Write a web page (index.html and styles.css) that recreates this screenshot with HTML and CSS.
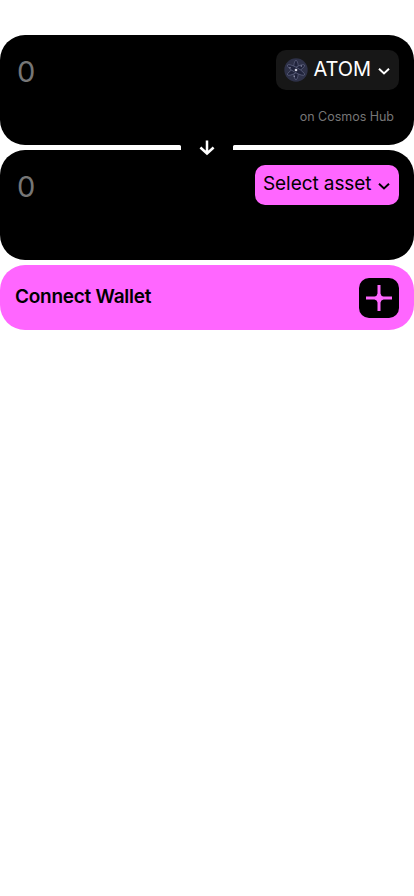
FILE: index.html
```html
<!DOCTYPE html>
<html lang="en">
<head>
<meta charset="utf-8">
<meta name="viewport" content="width=device-width, initial-scale=1">
<title>Swap</title>
<link rel="stylesheet" href="styles.css">
</head>
<body>
<main class="swap">
  <section class="panel">
    <span class="amount">0</span>
    <div class="side">
      <button class="asset asset-dark">
        <svg class="coin" viewBox="0 0 24 24" aria-hidden="true">
          <circle cx="12" cy="12" r="11.7" fill="#2e3148"/>
          <g fill="#20233b" stroke="#686c8a" stroke-width=".6">
            <ellipse cx="12" cy="12" rx="2.5" ry="9.8"/>
            <ellipse cx="12" cy="12" rx="2.5" ry="9.8" transform="rotate(60 12 12)"/>
            <ellipse cx="12" cy="12" rx="2.5" ry="9.8" transform="rotate(120 12 12)"/>
          </g>
          <circle cx="12" cy="12" r="1.3" fill="#d5d7e5"/>
          <g fill="#9a9db5"><circle cx="6" cy="9.7" r=".7"/><circle cx="17.3" cy="8" r=".7"/><circle cx="10.3" cy="18.3" r=".7"/></g>
        </svg>
        <span class="ticker">ATOM</span>
        <svg class="chevron" viewBox="0 0 12 8" aria-hidden="true"><path d="M1 1.8 6 6.4 11 1.8"/></svg>
      </button>
      <span class="chain">on Cosmos Hub</span>
    </div>
  </section>
  <div class="bridge">
    <svg class="arrow" viewBox="0 0 16 16" aria-hidden="true"><path d="M8 .5V14M1.4 7.5 8 13.5 14.6 7.5"/></svg>
  </div>
  <section class="panel">
    <span class="amount">0</span>
    <div class="side">
      <button class="asset asset-pink">
        <span class="select">Select asset</span>
        <svg class="chevron" viewBox="0 0 12 8" aria-hidden="true"><path d="M1 1.8 6 6.4 11 1.8"/></svg>
      </button>
    </div>
  </section>
  <button class="connect">
    <span class="connect-label">Connect Wallet</span>
    <span class="plus"><svg viewBox="0 0 40 40" aria-hidden="true"><path d="M18.5 7h3v8.5q.4 2.6 3 3H33v3h-8.5q-2.6.4-3 3V33h-3v-8.5q-.4-2.6-3-3H7v-3h8.5q2.6-.4 3-3z"/></svg></span>
  </button>
</main>
</body>
</html>
```

FILE: styles.css
```css
* { box-sizing: border-box; }
body { margin: 0; background: #fff; font-family: Inter, "Liberation Sans", sans-serif; }
button { border: 0; font: inherit; }
svg { display: block; flex: none; }
.swap { display: flex; flex-direction: column; gap: 5px; padding-top: 35px; position: relative; }
.panel { display: flex; justify-content: space-between; height: 110px; padding: 15px; border-radius: 25px; background: #000; }
.amount { padding: 2px 0 0 2px; color: #767676; font-size: 29px; font-weight: 400; line-height: 40px; }
.side { display: flex; flex-direction: column; align-items: flex-end; }
.asset { display: flex; align-items: center; height: 40px; padding: 0 9px 0 8px; border-radius: 10px; line-height: 24px; white-space: nowrap; }
.asset-dark { width: 123px; background: #171717; color: #fff; }
.asset-pink { width: 144px; background: #f6f; color: #000; }
.coin { width: 24px; height: 24px; margin-left: -.5px; }
.ticker { margin: -3px 0 0 6px; font-size: 20px; letter-spacing: -.1px; }
.select { margin-top: -2px; font-size: 19px; letter-spacing: -.08px; }
.chevron { width: 12px; height: 8px; margin-left: auto; margin-top: 1px; fill: none; stroke: currentColor; stroke-width: 2; }
.chain { margin: 18px 5px 0 0; color: #767676; font-size: 12.5px; letter-spacing: -.02px; line-height: 18px; }
.bridge { position: absolute; top: 140px; left: 178px; display: flex; align-items: center; justify-content: center; width: 58px; height: 16px; }
.bridge::before { content: ""; position: absolute; top: 5px; left: 0; width: 58px; height: 5px; background: #000; }
.bridge::after { content: ""; position: absolute; top: 5px; left: 0; width: 58px; height: 5px; background: #fff; clip-path: path("M0 0H1.5Q3 0 3 1.5V5H0ZM58 0H56.5Q55 0 55 1.5V5H58Z"); }
.arrow { position: relative; width: 16px; height: 16px; fill: none; stroke: #fff; stroke-width: 2.5; z-index: 1; }
.connect { display: flex; align-items: center; justify-content: space-between; height: 65px; padding: 0 15px; border-radius: 25px; background: #f6f; color: #000; }
.connect-label { margin-top: -2px; font-size: 19px; font-weight: 600; letter-spacing: -.25px; line-height: 24px; }
.plus { width: 40px; height: 40px; border-radius: 10px; background: #000; }
.plus path { fill: #f6f; }
```
